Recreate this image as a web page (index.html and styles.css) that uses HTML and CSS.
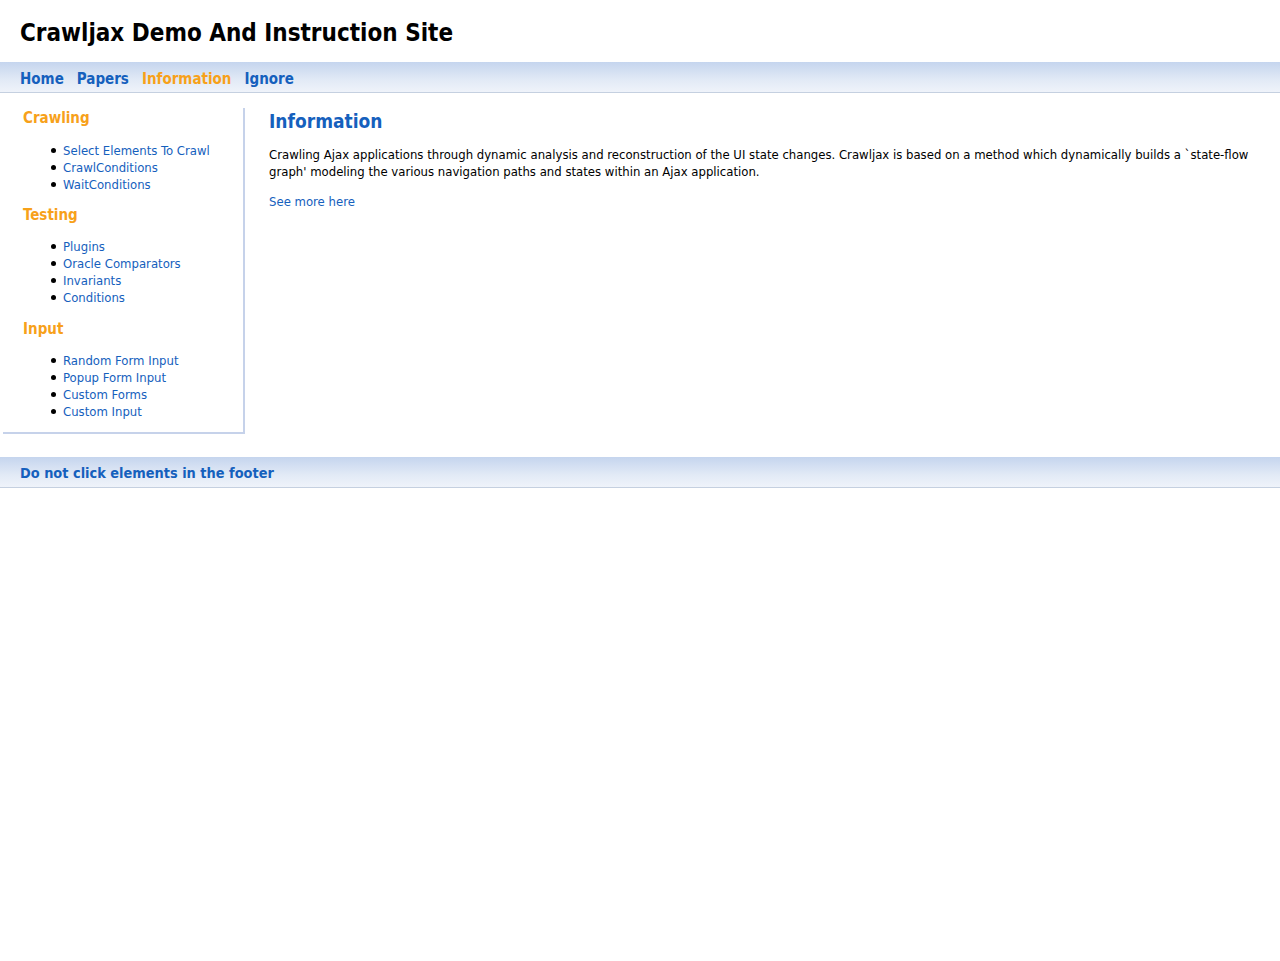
FILE: index.html
```html
<!DOCTYPE html>
<html>
<head>
<meta charset="utf-8">
<title>Crawljax Demo And Instruction Site</title>
<link rel="stylesheet" href="styles.css">
</head>
<body>
<div class="header"><h1>Crawljax Demo And Instruction Site</h1></div>
<div class="nav">
  <a href="#" class="navlink">Home</a>
  <a href="#" class="navlink">Papers</a>
  <a href="#" class="navlink active">Information</a>
  <a href="#" class="navlink">Ignore</a>
</div>
<div class="main">
  <div class="sidebar">
    <h3>Crawling</h3>
    <ul class="first">
      <li><a href="#">Select Elements To Crawl</a></li>
      <li><a href="#">CrawlConditions</a></li>
      <li><a href="#">WaitConditions</a></li>
    </ul>
    <h3>Testing</h3>
    <ul class="second">
      <li><a href="#">Plugins</a></li>
      <li><a href="#">Oracle Comparators</a></li>
      <li><a href="#">Invariants</a></li>
      <li><a href="#">Conditions</a></li>
    </ul>
    <h3>Input</h3>
    <ul class="third">
      <li><a href="#">Random Form Input</a></li>
      <li><a href="#">Popup Form Input</a></li>
      <li><a href="#">Custom Forms</a></li>
      <li><a href="#">Custom Input</a></li>
    </ul>
  </div>
  <div class="content">
    <h2>Information</h2>
    <p>Crawling Ajax applications through dynamic analysis and reconstruction of the UI state changes. Crawljax is based on a method which dynamically builds a `state-flow graph' modeling the various navigation paths and states within an Ajax application.</p>
    <p><a href="#">See more here</a></p>
  </div>
</div>
<div class="footer"><a href="#">Do not click elements in the footer</a></div>
</body>
</html>
```
FILE: styles.css
```css
html, body {
  margin: 0;
  padding: 0;
  background: #fff;
}
body {
  font-family: "DejaVu Sans", Verdana, sans-serif;
  font-stretch: condensed;
  font-size: 13px;
  color: #000;
}
a {
  color: #1560bd;
  text-decoration: none;
}
.header {
  height: 62px;
  padding: 0 20px;
  box-sizing: border-box;
}
.header h1 {
  margin: 0;
  padding-top: 18px;
  font-size: 24px;
  line-height: 30px;
  font-weight: bold;
}
.nav, .footer {
  height: 31px;
  box-sizing: border-box;
  padding: 3px 20px 0;
  display: flex;
  align-items: center;
  gap: 13px;
  background: linear-gradient(to bottom, #c5d5ee 0%, #e2eaf6 60%, #eff3fa 100%);
  border-bottom: 1px solid #c5d0e0;
}
.navlink {
  font-weight: bold;
  font-size: 15px;
  color: #1560bd;
}
.footer {
  padding-top: 1px;
}
.footer a {
  font-weight: bold;
  font-size: 14.4px;
  color: #1560bd;
}
.navlink.active {
  color: #f7a11a;
}
.main {
  display: flex;
  padding-top: 15px;
  padding-bottom: 23px;
}
.sidebar {
  width: 220px;
  margin-left: 3px;
  padding: 0 0 12px 20px;
  border-right: 2px solid #c6d2ea;
  border-bottom: 2px solid #c6d2ea;
}
.sidebar h3 {
  margin: 0;
  color: #f7a11a;
  font-size: 15px;
  line-height: 20px;
  font-weight: bold;
}
.sidebar ul {
  margin: 13px 0 12px 0;
  padding-left: 40px;
  list-style: none;
  line-height: 17px;
}
.sidebar ul.first {
  margin-top: 14px;
}
.sidebar ul.second {
  margin-bottom: 13px;
}
.sidebar ul.third {
  margin-bottom: 0;
}
.sidebar li::before {
  content: "";
  display: inline-block;
  width: 5px;
  height: 5px;
  border-radius: 50%;
  background: #000;
  margin-left: -12px;
  margin-right: 7px;
  vertical-align: middle;
  position: relative;
  top: -1px;
}
.content {
  flex: 1;
  padding: 0 24px 0 24px;
}
.content h2 {
  margin: 0;
  color: #1560bd;
  font-size: 19px;
  line-height: 26px;
  font-weight: bold;
}
.content p {
  margin: 12px 0 13px;
  line-height: 17px;
}
```
